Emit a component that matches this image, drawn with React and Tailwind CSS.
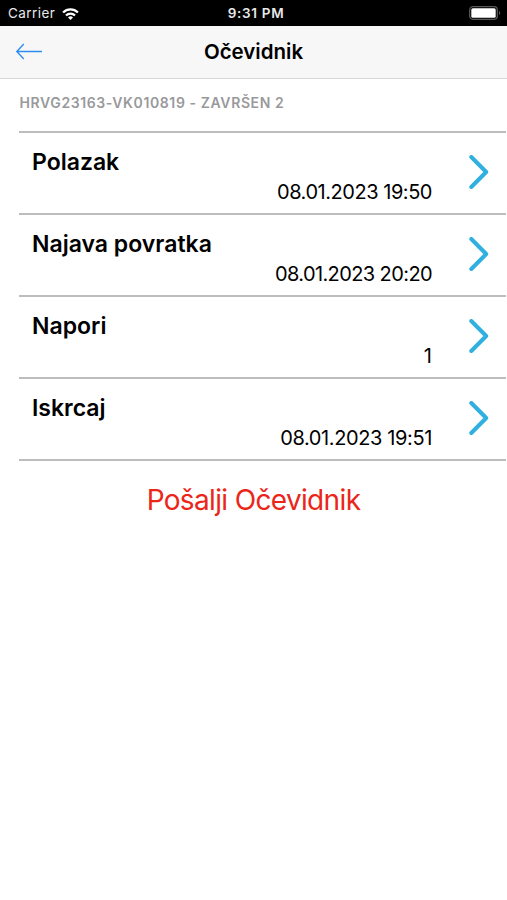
const entries = [
  { title: 'Polazak', value: '08.01.2023 19:50', tracking: 'tracking-[-0.46px]' },
  { title: 'Najava povratka', value: '08.01.2023 20:20', tracking: 'tracking-[-0.6px]' },
  { title: 'Napori', value: '1', tracking: 'tracking-normal' },
  { title: 'Iskrcaj', value: '08.01.2023 19:51', tracking: 'tracking-[-0.38px]' },
]

function WifiIcon() {
  return (
    <svg width="17" height="12" viewBox="0 0 17 12" fill="none" stroke="white" strokeWidth="2.3">
      <path d="M1.1 4.5a10.4 10.4 0 0 1 14.8 0" />
      <path d="M4 7.5a6.4 6.4 0 0 1 9 0" />
      <path d="M8.5 12 6 9.5a3.6 3.6 0 0 1 5 0Z" fill="white" stroke="none" />
    </svg>
  )
}

function BatteryIcon() {
  return (
    <svg width="32" height="14" viewBox="0 0 32 14" fill="none">
      <rect x="0.7" y="0.7" width="27.6" height="12.6" rx="3.2" stroke="#58585a" strokeWidth="1.3" />
      <rect x="2.3" y="2.3" width="24.4" height="9.4" rx="1.5" fill="white" />
      <path d="M30 4.9c1.6.7 1.6 3.5 0 4.2Z" fill="#58585a" />
    </svg>
  )
}

function Chevron() {
  return (
    <svg className="mb-0.5" width="20" height="34" viewBox="0 0 20 34" fill="none" stroke="#30b0e0" strokeWidth="4">
      <path d="m2.3 2 14.9 15L2.3 32" strokeLinecap="round" strokeLinejoin="round" />
    </svg>
  )
}

export default function App() {
  return (
    <div className="h-[900px] w-[507px] overflow-hidden bg-white font-['Inter',sans-serif] text-black">
      {/* Status bar */}
      <div className="grid h-[26px] grid-cols-3 items-center bg-black pr-[6px] pl-2 text-[13.5px] text-[#e8e8e8]">
        <div className="flex items-center gap-[7px] pt-px">
          <span className="tracking-[0.45px]">Carrier</span>
          <WifiIcon />
        </div>
        <span className="pt-px pl-[3px] text-center font-semibold tracking-[0.7px]">9:31 PM</span>
        <div className="flex justify-end"><BatteryIcon /></div>
      </div>

      {/* Header */}
      <header className="grid h-[53px] grid-cols-[60px_1fr_60px] items-center border-b border-[#d8d8d9] bg-[#f7f7f7]">
        <svg className="mb-px ml-[15px]" width="28" height="17" viewBox="0 0 28 17" fill="none" stroke="#2f8cf0" strokeWidth="1.4">
          <path d="M27 8.5H1.8M8.8 1 1.8 8.5l7 7.5" />
        </svg>
        <h1 className="text-center text-[20.5px] font-semibold">Očevidnik</h1>
      </header>

      <p className="flex h-[52px] items-center pb-[6px] pl-[19.5px] text-[14px] font-semibold tracking-[0.61px] text-[#99999c]">
        HRVG23163-VK010819 - ZAVRŠEN 2
      </p>

      {/* Entries */}
      <div className="mr-px ml-[19px] border-t-2 border-[#bdbdbd]">
        {entries.map(entry => (
          <div key={entry.title} className="flex h-[82px] items-center border-b-2 border-[#bdbdbd] pr-[17px] pl-[13px]">
            <div className="flex-1 pt-[7px]">
              <h2 className="text-[23px] leading-[30px] font-semibold">{entry.title}</h2>
              <p className={`pr-[37px] text-right text-[20px] leading-[30px] ${entry.tracking}`}>{entry.value}</p>
            </div>
            <Chevron />
          </div>
        ))}
      </div>

      <button className="block w-full pt-[21px] text-center text-[28px] leading-[36px] tracking-[-0.65px] text-[#eb2619]">
        Pošalji Očevidnik
      </button>
    </div>
  )
}
